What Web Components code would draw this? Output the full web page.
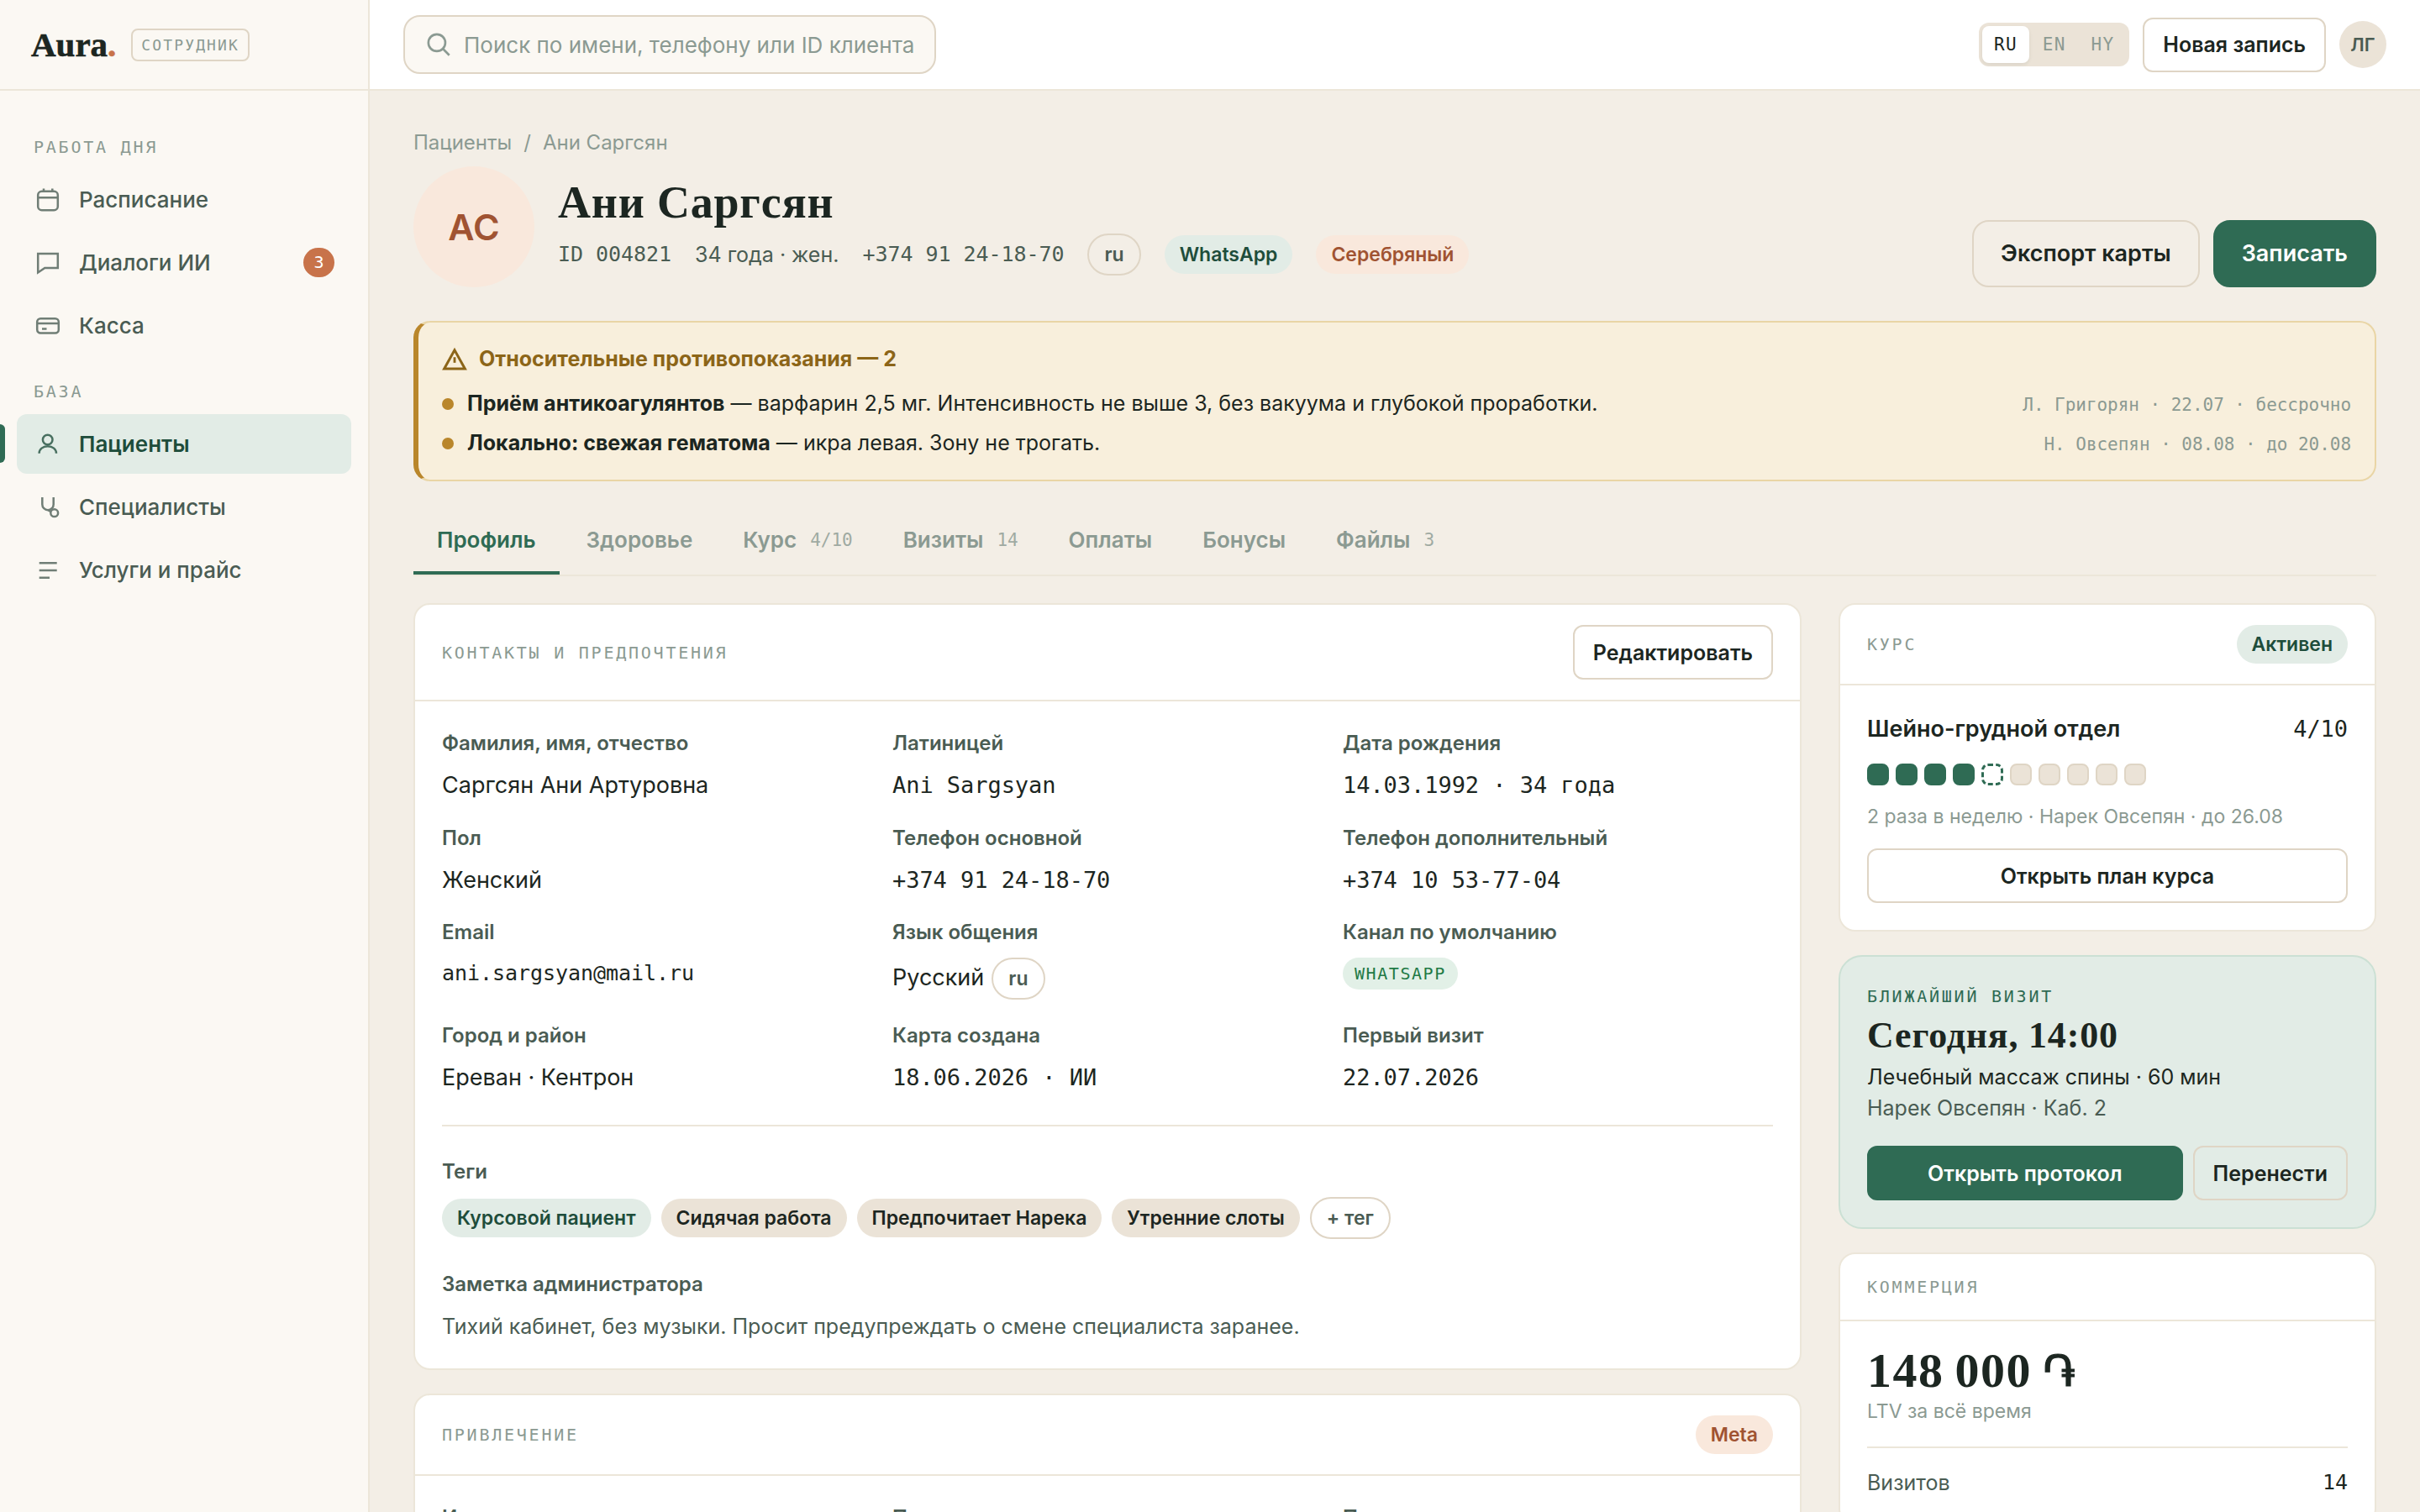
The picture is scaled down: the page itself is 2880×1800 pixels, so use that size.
<!DOCTYPE html>
<html lang="ru">
<head>
<meta charset="UTF-8">
<title>Aura — Ани Саргсян</title>
<style>
  :root {
    --bg: #f3eee6;
    --surface: #ffffff;
    --cream: #fbf8f3;
    --sand: #ebe3d7;
    --line: #ece6d9;
    --line-strong: #dfd5c5;
    --ink: #1c2621;
    --ink-2: #4a5c53;
    --ink-3: #8b9a92;
    --green: #2f6b54;
    --green-dark: #1e4d3b;
    --green-soft: #e2ece6;
    --clay: #c8734a;
    --clay-dark: #a05332;
    --clay-soft: #f9e8dc;
    --amber: #b9862b;
    --amber-dark: #8c6518;
    --red: #b5443c;
    --sans: Inter, "Liberation Sans", sans-serif;
    --serif: "Liberation Serif", serif;
    --mono: "DejaVu Sans Mono", monospace;
  }

  body {
    margin: 0;
    height: 1800px;
    overflow: hidden;
    background: var(--bg);
    color: var(--ink);
    font: 400 27px/40px var(--sans);
  }
</style>
</head>
<body>
<crm-app></crm-app>

<script>
// Registers an element whose shadow root is a clone of one template.
const define = (name, css, html, setup) => {
  const template = document.createElement('template');
  template.innerHTML = `<style>* { box-sizing: border-box; } ${css}</style>${html}`;

  customElements.define(name, class extends HTMLElement {
    constructor() {
      super();
      this.attachShadow({ mode: 'open' }).append(template.content.cloneNode(true));
    }

    connectedCallback() {
      if (setup) setup(this, this.shadowRoot);
    }
  });
};

const ICONS = {
  calendar: '<rect x="5.200" y="6.800" width="23.600" height="22.500" rx="4.500"/><path d="M5.200 14.200h23.600M12 3.500v4.500M22.300 3.500v4.500"/>',
  chat: '<path d="M5.200 6h23.600v17H13.300L5.200 28.500z"/>',
  card: '<rect x="4.200" y="8.200" width="25.600" height="17.400" rx="4"/><path d="M4.200 13.900h25.600M10 20.400h5.500"/>',
  user: '<circle cx="16.700" cy="11.500" r="5.800"/><path d="M6.600 27.700c0-5 4.300-8.400 10.200-8.400s10.200 3.400 10.200 8.400"/>',
  steth: '<path d="M10.300 5v8.500a6.700 6.700 0 0 0 13.400 0V5M17 20.200l3.600 2"/><circle cx="24.700" cy="23.700" r="4.400"/>',
  list: '<path d="M6.700 8.300h21M6.700 17h21M6.700 25.700h12.300"/>',
  search: '<circle cx="15" cy="15" r="9.500"/><path d="M22 22l7 7"/>',
  warning: '<path d="M17 5.500L3 30.500h28z" stroke-width="3.400" stroke-linejoin="miter"/><path d="M17 15v7.500" stroke-width="3.200"/>'
};

define('ui-icon', `
  :host { display: block; width: 34px; height: 34px; flex: none; }
  svg { display: block; width: 100%; height: 100%; overflow: visible; fill: none; stroke: currentColor; stroke-width: 2.5; }
`, '<svg viewBox="0 0 34 34"></svg>', (el, root) => {
  root.querySelector('svg').innerHTML = ICONS[el.getAttribute('name')];
});

define('ui-button', `
  :host { display: flex; }
  button {
    flex: 1;
    height: 65px;
    padding: 0 22px;
    border: 2px solid var(--line-strong);
    border-radius: 12px;
    background: transparent;
    color: var(--ink);
    font: 600 25px/36px var(--sans);
    white-space: nowrap;
  }
  :host([white]) button { background: var(--surface); }
  :host([primary]) button { background: var(--green); border-color: var(--green); color: #fff; }
  :host([large]) button { height: 80px; padding: 0 32px; border-radius: 20px; font-size: 27px; }
`, '<button type="button"><slot></slot></button>');

define('ui-chip', `
  :host {
    display: inline-flex;
    align-items: center;
    height: 46px;
    padding: 0 18px;
    border-radius: 25px;
    background: var(--sand);
    color: var(--ink);
    font: 600 23px/34px var(--sans);
    white-space: nowrap;
  }
  :host([tone="green"]) { background: var(--green-soft); color: var(--green-dark); }
  :host([tone="clay"]) { background: var(--clay-soft); color: var(--clay-dark); }
  :host([tone="outline"]) { height: 50px; background: none; border: 2px solid var(--line-strong); color: var(--ink-2); }
  :host([tone="channel"]) {
    height: 38px;
    padding: 0 14px;
    background: #e2f0e7;
    color: #1f7a46;
    font: 400 20px/30px var(--mono);
    letter-spacing: 1.56px;
  }
`, '<slot></slot>');

define('ui-label', `
  :host {
    display: block;
    color: var(--ink-3);
    font: 400 20px/30px var(--mono);
    letter-spacing: 2.760px;
    text-transform: uppercase;
    white-space: nowrap;
  }
`, '<slot></slot>');

define('nav-item', `
  :host {
    position: relative;
    display: flex;
    align-items: center;
    gap: 20px;
    height: 71px;
    padding: 0 20px;
    border-radius: 12px;
    color: var(--ink-2);
    font: 500 26px/40px var(--sans);
  }
  ui-icon { opacity: .78; }
  .text { padding-top: 1px; }
  .badge {
    display: none;
    margin-left: auto;
    width: 37px;
    height: 35px;
    border-radius: 18px;
    background: var(--clay);
    color: #fff;
    font: 500 20px/35px var(--mono);
    text-align: center;
  }
  :host([badge]) .badge { display: block; }
  :host([active]) { background: var(--green-soft); color: var(--green-dark); font-weight: 600; }
  :host([active])::before {
    content: "";
    position: absolute;
    left: -20px;
    top: 12px;
    width: 6px;
    height: 46px;
    border-radius: 0 6px 6px 0;
    background: var(--green);
  }
`, '<ui-icon></ui-icon><span class="text"><slot></slot></span><span class="badge"></span>', (el, root) => {
  const icon = document.createElement('ui-icon');
  icon.setAttribute('name', el.getAttribute('icon'));
  root.querySelector('ui-icon').replaceWith(icon);
  root.querySelector('.badge').textContent = el.getAttribute('badge') || '';
});

define('app-sidebar', `
  :host { display: flex; flex-direction: column; background: var(--cream); border-right: 2px solid var(--line); }
  header {
    display: flex;
    align-items: center;
    gap: 18px;
    height: 108px;
    padding: 0 37px;
    border-bottom: 2px solid var(--line);
  }
  .logo { font: 700 41px/50px var(--serif); -webkit-text-stroke: .6px currentColor; }
  .logo span { color: var(--clay); -webkit-text-stroke-color: var(--clay); }
  .role {
    padding: 0 10px;
    border: 2px solid var(--line-strong);
    border-radius: 8px;
    color: var(--ink-3);
    font: 400 18px/35px var(--mono);
    letter-spacing: 2.120px;
  }
  nav { display: flex; flex-direction: column; gap: 4px; padding: 0 20px; }
  ui-label { padding-left: 20px; }
  ui-label:first-child { margin-top: 52px; margin-bottom: 8px; }
  ui-label:nth-of-type(2) { margin: 24px 0 8px; }
`, `
  <header>
    <div class="logo">Aura<span>.</span></div>
    <div class="role">СОТРУДНИК</div>
  </header>
  <nav>
    <ui-label>Работа дня</ui-label>
    <nav-item icon="calendar">Расписание</nav-item>
    <nav-item icon="chat" badge="3">Диалоги ИИ</nav-item>
    <nav-item icon="card">Касса</nav-item>
    <ui-label>База</ui-label>
    <nav-item icon="user" active>Пациенты</nav-item>
    <nav-item icon="steth">Специалисты</nav-item>
    <nav-item icon="list">Услуги и прайс</nav-item>
  </nav>
`);

define('lang-switch', `
  :host { display: flex; gap: 2px; padding: 4px; border-radius: 12px; background: var(--sand); }
  span {
    height: 44px;
    padding: 0 14px;
    border-radius: 8px;
    color: var(--ink-3);
    font: 400 21px/44px var(--mono);
    letter-spacing: 1.220px;
  }
  .on { background: #fff; color: var(--ink); box-shadow: 0 2px 4px rgba(28, 38, 33, .08); }
`, '<span class="on">RU</span><span>EN</span><span>HY</span>');

define('app-topbar', `
  :host {
    display: flex;
    align-items: center;
    gap: 16px;
    height: 108px;
    padding: 0 40px;
    border-bottom: 2px solid var(--line);
    background: var(--surface);
  }
  .search {
    display: flex;
    align-items: center;
    gap: 12px;
    width: 634px;
    height: 70px;
    margin-right: auto;
    padding: 0 22px;
    border: 2px solid var(--line-strong);
    border-radius: 20px;
    background: var(--cream);
    color: var(--ink-3);
    font-size: 26px;
    white-space: nowrap;
  }
  .search span { padding-top: 2px; }
  .search ui-icon { width: 36px; height: 36px; }
  .avatar {
    width: 56px;
    height: 56px;
    border-radius: 50%;
    background: var(--sand);
    color: var(--ink-2);
    font: 600 22px/57px var(--sans);
    text-align: center;
  }
`, `
  <div class="search"><ui-icon name="search"></ui-icon><span>Поиск по имени, телефону или ID клиента</span></div>
  <lang-switch></lang-switch>
  <ui-button white>Новая запись</ui-button>
  <div class="avatar">ЛГ</div>
`);

define('patient-header', `
  :host { display: block; }
  .crumbs { display: flex; gap: 14px; padding-top: 1px; color: var(--ink-3); font-size: 24px; line-height: 38px; }
  .row { display: flex; align-items: flex-end; gap: 16px; margin-top: 9px; }
  .avatar {
    width: 144px;
    height: 144px;
    margin-right: 12px;
    border-radius: 50%;
    background: var(--clay-soft);
    color: var(--clay-dark);
    font: 600 43px/144px var(--sans);
    text-align: center;
  }
  .info { align-self: center; margin-right: auto; }
  h1 { margin: 0 0 8px; font: 700 54px/58px var(--serif); letter-spacing: .8px; }
  .meta { display: flex; align-items: center; gap: 28px; height: 50px; color: var(--ink-2); font-size: 25px; white-space: nowrap; }
  .mono { font: 400 25px/38px var(--mono); letter-spacing: -.05px; }
`, `
  <div class="crumbs"><span>Пациенты</span><span>/</span><span>Ани Саргсян</span></div>
  <div class="row">
    <div class="avatar">АС</div>
    <div class="info">
      <h1>Ани Саргсян</h1>
      <div class="meta">
        <span class="mono">ID 004821</span>
        <span>34 года · жен.</span>
        <span class="mono">+374 91 24-18-70</span>
        <ui-chip tone="outline">ru</ui-chip>
        <ui-chip tone="green">WhatsApp</ui-chip>
        <ui-chip tone="clay">Серебряный</ui-chip>
      </div>
    </div>
    <ui-button large>Экспорт карты</ui-button>
    <ui-button large primary>Записать</ui-button>
  </div>
`);

define('alert-row', `
  :host { display: flex; align-items: center; gap: 16px; height: 39px; font-size: 25px; }
  i { width: 14px; height: 14px; margin-top: 3px; border-radius: 50%; background: var(--amber); }
  .text { padding-top: 1px; }
  .by { margin-left: auto; padding-top: 4px; color: var(--ink-3); font: 400 21px/30px var(--mono); letter-spacing: -.04px; }
`, '<i></i><span class="text"><slot></slot></span><span class="by"><slot name="by"></slot></span>');

define('alert-box', `
  :host {
    display: flex;
    flex-direction: column;
    gap: 8px;
    margin-top: 40px;
    padding: 25px 28px 25px;
    border: 2px solid #e9d5a5;
    border-left: 6px solid var(--amber);
    border-radius: 20px;
    background: #f8efdc;
  }
  .title {
    display: flex;
    align-items: center;
    gap: 14px;
    height: 35px;
    margin-bottom: 8px;
    color: var(--amber-dark);
    font-size: 25px;
    font-weight: 700;
  }
  ui-icon { width: 30px; height: 30px; }
`, `
  <div class="title"><ui-icon name="warning"></ui-icon><slot name="title"></slot></div>
  <slot></slot>
`);

define('tab-item', `
  :host {
    display: flex;
    align-items: center;
    gap: 16px;
    padding: 19px 28px 17px;
    border-bottom: 4px solid transparent;
    color: var(--ink-3);
    font-size: 26px;
    font-weight: 600;
  }
  :host([active]) { color: var(--green); border-color: var(--green); }
  small { padding-top: 1px; font: 500 21px/39px var(--mono); letter-spacing: -.04px; opacity: .8; }
  small:empty { display: none; }
`, '<slot></slot><small></small>', (el, root) => {
  root.querySelector('small').textContent = el.getAttribute('count') || '';
});

define('tab-bar', `
  :host { display: flex; gap: 4px; margin-top: 31px; border-bottom: 2px solid var(--line); }
`, '<slot></slot>');

define('ui-card', `
  :host { display: block; border: 2px solid var(--line); border-radius: 20px; background: var(--surface); }
  header {
    display: flex;
    align-items: center;
    justify-content: space-between;
    padding: 24px 32px;
    border-bottom: 2px solid var(--line);
  }
  .body { padding: 32px; }
`, `
  <header><ui-label><slot name="title"></slot></ui-label><slot name="action"></slot></header>
  <div class="body"><slot></slot></div>
`);

define('field-item', `
  :host { display: block; white-space: nowrap; }
  .label { margin-bottom: 13px; padding-top: 1px; color: var(--ink-2); font-size: 24px; font-weight: 600; line-height: 34px; }
  .value { display: flex; align-items: baseline; gap: 9px; min-height: 39.600px; line-height: 39.600px; }
  :host([mono]) .value { font-family: var(--mono); letter-spacing: -.05px; }
  :host([mono="small"]) .value { font-size: 25px; line-height: 37px; }
  :host([muted]) .value { min-height: 38px; color: var(--ink-2); font-size: 25px; line-height: 40px; height: 38px; }
`, '<div class="label"></div><div class="value"><slot></slot></div>', (el, root) => {
  root.querySelector('.label').textContent = el.getAttribute('label');
});

define('contacts-card', `
  :host { display: block; }
  .grid { display: grid; grid-template-columns: repeat(3, 1fr); gap: 25px 24px; }
  .extra { display: grid; gap: 36px; margin-top: 36px; padding-top: 36px; border-top: 2px solid var(--line); }
  .tags { display: flex; align-items: center; gap: 12px; }
`, `
  <ui-card>
    <span slot="title">Контакты и предпочтения</span>
    <ui-button slot="action" white>Редактировать</ui-button>
    <div class="grid">
      <field-item label="Фамилия, имя, отчество">Саргсян Ани Артуровна</field-item>
      <field-item label="Латиницей" mono>Ani Sargsyan</field-item>
      <field-item label="Дата рождения" mono>14.03.1992 · 34 года</field-item>
      <field-item label="Пол">Женский</field-item>
      <field-item label="Телефон основной" mono>+374 91 24-18-70</field-item>
      <field-item label="Телефон дополнительный" mono>+374 10 53-77-04</field-item>
      <field-item label="Email" mono="small">ani.sargsyan@mail.ru</field-item>
      <field-item label="Язык общения">Русский <ui-chip tone="outline">ru</ui-chip></field-item>
      <field-item label="Канал по умолчанию"><ui-chip tone="channel">WHATSAPP</ui-chip></field-item>
      <field-item label="Город и район">Ереван · Кентрон</field-item>
      <field-item label="Карта создана" mono>18.06.2026 · ИИ</field-item>
      <field-item label="Первый визит" mono>22.07.2026</field-item>
    </div>
    <div class="extra">
      <field-item label="Теги">
        <div class="tags">
          <ui-chip tone="green">Курсовой пациент</ui-chip>
          <ui-chip>Сидячая работа</ui-chip>
          <ui-chip>Предпочитает Нарека</ui-chip>
          <ui-chip>Утренние слоты</ui-chip>
          <ui-chip tone="outline">+ тег</ui-chip>
        </div>
      </field-item>
      <field-item label="Заметка администратора" muted>Тихий кабинет, без музыки. Просит предупреждать о смене специалиста заранее.</field-item>
    </div>
  </ui-card>
`);

define('source-card', `
  :host { display: block; }
  .grid { display: grid; grid-template-columns: repeat(3, 1fr); gap: 25px 24px; }
`, `
  <ui-card>
    <span slot="title">Привлечение</span>
    <ui-chip slot="action" tone="clay">Meta</ui-chip>
    <div class="grid">
      <field-item label="Источник"></field-item>
      <field-item label="Первое касание"></field-item>
      <field-item label="Промокод"></field-item>
    </div>
  </ui-card>
`);

define('course-card', `
  :host { display: block; }
  .head { display: flex; justify-content: space-between; padding-top: 1px; line-height: 37px; }
  b { font-weight: 600; }
  .mono { font-family: var(--mono); letter-spacing: -.05px; }
  .cells { display: flex; gap: 8px; margin-top: 23px; }
  .cells i { width: 26px; height: 26px; border: 2px solid var(--line-strong); border-radius: 8px; background: var(--sand); }
  .cells .done { background: var(--green); border-color: var(--green); }
  .cells .next { background: none; border: 3px dashed var(--green); }
  p { margin: 19px 0 20px; color: var(--ink-3); font-size: 23px; line-height: 36px; }
`, `
  <ui-card>
    <span slot="title">Курс</span>
    <ui-chip slot="action" tone="green">Активен</ui-chip>
    <div class="head"><b>Шейно-грудной отдел</b><span class="mono">4/10</span></div>
    <div class="cells">
      <i class="done"></i><i class="done"></i><i class="done"></i><i class="done"></i><i class="next"></i>
      <i></i><i></i><i></i><i></i><i></i>
    </div>
    <p>2 раза в неделю · Нарек Овсепян · до 26.08</p>
    <ui-button white>Открыть план курса</ui-button>
  </ui-card>
`);

define('visit-card', `
  :host {
    display: block;
    padding: 32px;
    border: 2px solid #cbe0d4;
    border-radius: 28px;
    background: var(--green-soft);
  }
  ui-label { color: var(--green); font-weight: 500; }
  h2 { margin: 7px 0 6px; font: 700 44px/50px var(--serif); letter-spacing: .8px; }
  p { margin: 0; font-size: 25px; line-height: 37px; }
  p + p { color: var(--ink-2); }
  .actions { display: flex; gap: 12px; margin-top: 26px; }
  .actions ui-button:first-child { flex: 1; }
`, `
  <ui-label>Ближайший визит</ui-label>
  <h2>Сегодня, 14:00</h2>
  <p>Лечебный массаж спины · 60 мин</p>
  <p>Нарек Овсепян · Каб. 2</p>
  <div class="actions">
    <ui-button primary>Открыть протокол</ui-button>
    <ui-button>Перенести</ui-button>
  </div>
`);

define('money-card', `
  :host { display: block; }
  .sum { display: flex; align-items: baseline; gap: 13px; height: 62px; margin-top: -4px; font: 700 58px/62px var(--serif); letter-spacing: 1.500px; word-spacing: -3px; }
  .sum span { font: 400 53px/62px "DejaVu Sans", sans-serif; -webkit-text-stroke: 1.200px currentColor; }
  .note { color: var(--ink-3); font-size: 23px; line-height: 34px; }
  .line { display: flex; justify-content: space-between; margin-top: 25px; padding-top: 24px; border-top: 2px solid var(--line); color: var(--ink-2); font-size: 25px; line-height: 34px; }
  .mono { color: var(--ink); font-family: var(--mono); }
`, `
  <ui-card>
    <span slot="title">Коммерция</span>
    <div class="sum">148 000<span>֏</span></div>
    <div class="note">LTV за всё время</div>
    <div class="line"><span>Визитов</span><span class="mono">14</span></div>
  </ui-card>
`);

define('patient-page', `
  :host { display: block; padding: 42px 52px 0; }
  .columns { display: grid; grid-template-columns: 1fr 640px; gap: 44px; align-items: start; margin-top: 32px; }
  .stack { display: grid; gap: 28px; }
  b { font-weight: 700; }
`, `
  <patient-header></patient-header>
  <alert-box>
    <span slot="title">Относительные противопоказания — 2</span>
    <alert-row><b>Приём антикоагулянтов</b> — варфарин 2,5 мг. Интенсивность не выше 3, без вакуума и глубокой проработки.<span slot="by">Л. Григорян · 22.07 · бессрочно</span></alert-row>
    <alert-row danger><b>Локально: свежая гематома</b> — икра левая. Зону не трогать.<span slot="by">Н. Овсепян · 08.08 · до 20.08</span></alert-row>
  </alert-box>
  <tab-bar>
    <tab-item active>Профиль</tab-item>
    <tab-item>Здоровье</tab-item>
    <tab-item count="4/10">Курс</tab-item>
    <tab-item count="14">Визиты</tab-item>
    <tab-item>Оплаты</tab-item>
    <tab-item>Бонусы</tab-item>
    <tab-item count="3">Файлы</tab-item>
  </tab-bar>
  <div class="columns">
    <div class="stack">
      <contacts-card></contacts-card>
      <source-card></source-card>
    </div>
    <div class="stack">
      <course-card></course-card>
      <visit-card></visit-card>
      <money-card></money-card>
    </div>
  </div>
`);

define('crm-app', `
  :host { display: grid; grid-template-columns: 440px 1fr; height: 1800px; overflow: hidden; }
  main { min-width: 0; }
`, `
  <app-sidebar></app-sidebar>
  <main>
    <app-topbar></app-topbar>
    <patient-page></patient-page>
  </main>
`);
</script>
</body>
</html>
